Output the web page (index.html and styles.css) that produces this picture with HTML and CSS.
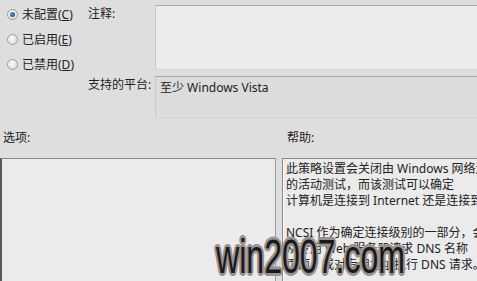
FILE: index.html
```html
<!DOCTYPE html>
<html lang="zh-CN">
<head>
    <meta charset="UTF-8">
    <title>组策略设置</title>
    <link rel="stylesheet" href="styles.css">
</head>
<body>

<div class="top">
    <div class="radios">
        <label class="radio"><span class="dot checked"></span><span>未配置(<u>C</u>)</span></label>
        <label class="radio"><span class="dot"></span><span>已启用(<u>E</u>)</span></label>
        <label class="radio"><span class="dot"></span><span>已禁用(<u>D</u>)</span></label>
    </div>
    <div class="fields">
        <div class="field-label">注释:</div>
        <div class="box comment"></div>
        <div class="field-label">支持的平台:</div>
        <div class="box platform">至少 Windows Vista</div>
    </div>
</div>

<div class="section-labels">
    <div class="options-label">选项:</div>
    <div class="help-label">帮助:</div>
</div>

<div class="panels">
    <div class="panel options"></div>
    <div class="panel help">
        <p>此策略设置会关闭由 Windows 网络连接状态指示器</p>
        <p>的活动测试，而该测试可以确定</p>
        <p>计算机是连接到 Internet 还是连接到受限网络。</p>
        <p>&nbsp;</p>
        <p>NCSI 作为确定连接级别的一部分，会执行以下操作</p>
        <p>从专用 Web 服务器请求 DNS 名称</p>
        <p>页面，或对专用地址执行 DNS 请求。</p>
    </div>
</div>

<div class="watermark">win2007.com</div>

</body>
</html>
```

FILE: styles.css
```css
html, body {
    margin: 0;
    height: 100%;
    overflow: hidden;
}
body {
    font-family: 'Noto Sans', 'Noto Sans CJK SC', sans-serif;
    font-size: 12px;
    color: #222;
    background: #dedede;
    position: relative;
}
.top {
    display: flex;
    padding-top: 5px;
}
.radios {
    flex: none;
    width: 81px;
    padding-left: 7px;
    display: flex;
    flex-direction: column;
    gap: 7px;
    padding-top: 0;
}
.radio {
    display: flex;
    align-items: center;
    height: 18px;
    gap: 4px;
    white-space: nowrap;
}
.dot {
    flex: none;
    width: 9px;
    height: 9px;
    border-radius: 50%;
    border: 1px solid #9a9a9a;
    background: radial-gradient(circle at 40% 35%, #fafafa, #d6d6d6);
    position: relative;
}
.dot.checked::after {
    content: '';
    position: absolute;
    left: 2px;
    top: 2px;
    width: 5px;
    height: 5px;
    border-radius: 50%;
    background: radial-gradient(circle at 40% 35%, #5a8fd0, #1d3f7a);
}
.fields {
    flex: none;
    display: grid;
    grid-template-columns: 67px 340px;
    row-gap: 6px;
}
.field-label {
    padding-top: 2px;
    line-height: 14px;
    white-space: nowrap;
}
.box {
    border: 1px solid #a8a8a8;
    border-right: none;
    border-left-color: #c8c8c8;
    border-bottom-color: #d4d4d4;
}
.comment {
    height: 63px;
    background: #ececec;
}
.platform {
    height: 40px;
    background: #dcdcdc;
    padding-left: 4px;
    line-height: 22px;
}
.section-labels {
    display: flex;
    margin-top: 11px;
    height: 29px;
}
.options-label {
    width: 281px;
    padding-left: 3px;
    line-height: 18px;
}
.help-label {
    padding-left: 3px;
    line-height: 18px;
}
.panels {
    display: flex;
    gap: 6px;
    height: 130px;
}
.panel {
    background: #ebebeb;
    border-top: 1px solid #8a8a8a;
}
.options {
    flex: none;
    width: 273px;
    border-left: 2px solid #5a5a5a;
    border-right: 1px solid #9a9a9a;
}
.help {
    flex: 1;
    border-left: 1px solid #8a8a8a;
    box-shadow: inset 1px 0 0 #fafafa;
    padding: 2px 0 0 3px;
    white-space: nowrap;
    overflow: hidden;
}
.help p {
    margin: 0;
    line-height: 16px;
}
.watermark {
    position: absolute;
    left: 216px;
    top: 231px;
    font-family: 'Liberation Sans', sans-serif;
    font-size: 49px;
    line-height: 50px;
    color: #1a1a1a;
    transform: scaleX(0.655);
    transform-origin: left top;
    text-shadow: 2px 2px 0 #9a9290, -2px -2px 0 #9a9290, 2px -2px 0 #9a9290, -2px 2px 0 #9a9290,
        0 3px 0 #9a9290, 0 -3px 0 #9a9290, 3px 0 0 #9a9290, -3px 0 0 #9a9290;
}
```
